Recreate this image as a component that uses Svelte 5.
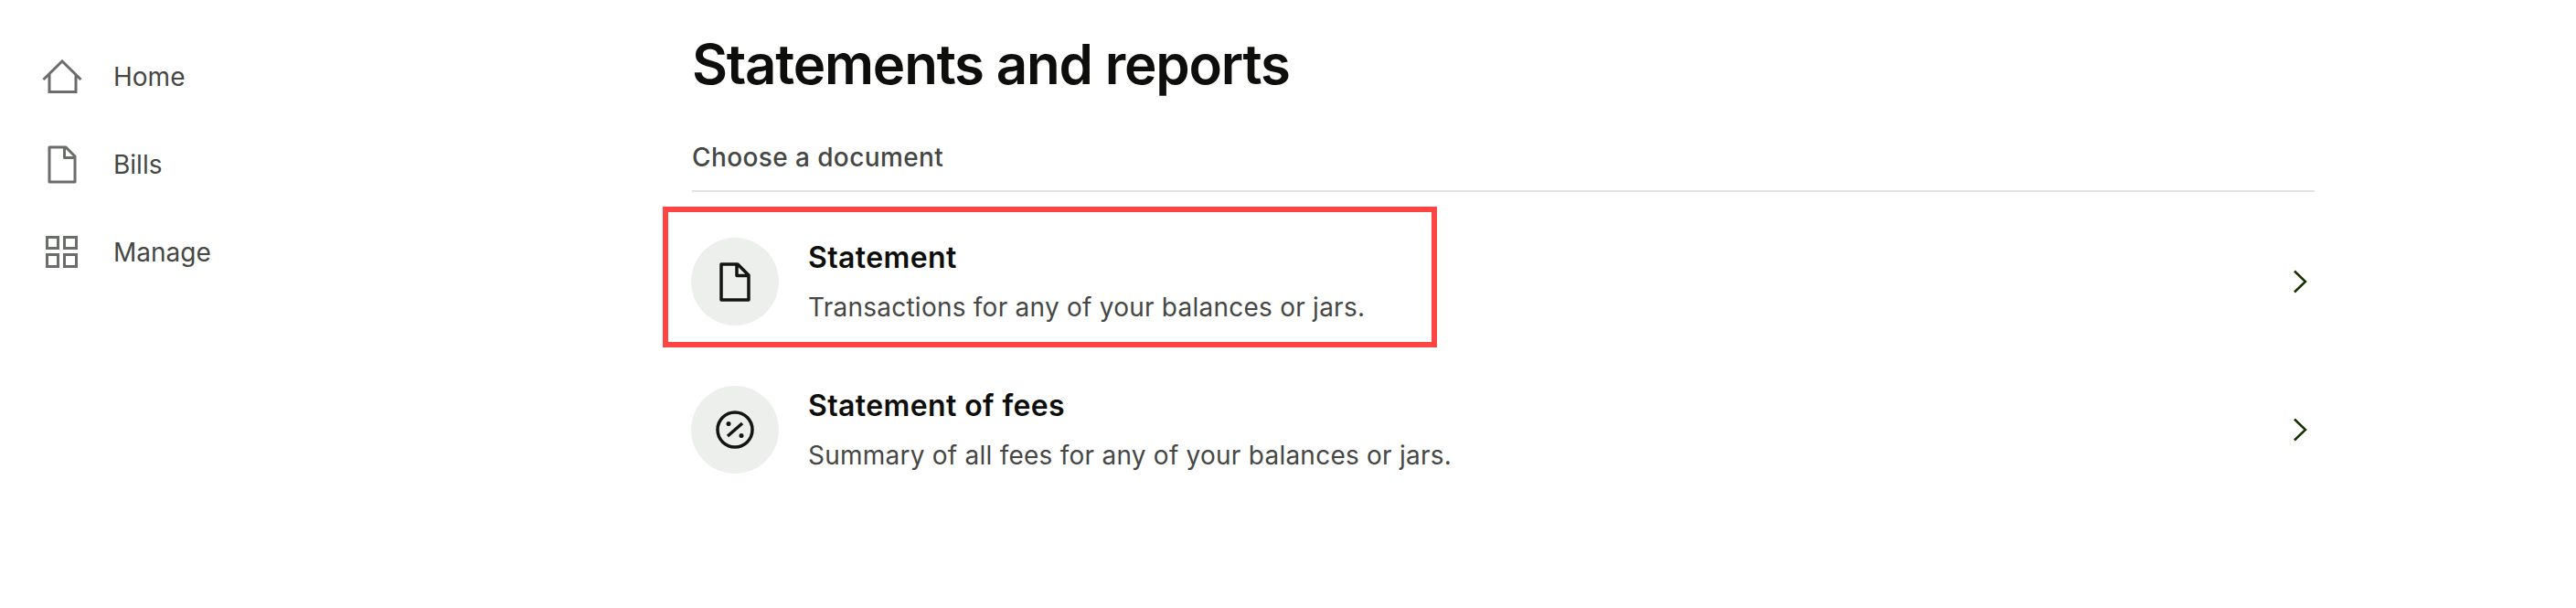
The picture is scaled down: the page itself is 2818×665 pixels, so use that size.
<script>
  const nav = [
    { label: 'Home', icon: 'home' },
    { label: 'Bills', icon: 'doc' },
    { label: 'Manage', icon: 'grid' }
  ];
  const docs = [
    { title: 'Statement', sub: 'Transactions for any of your balances or jars.', icon: 'doc', marked: true },
    { title: 'Statement of fees', sub: 'Summary of all fees for any of your balances or jars.', icon: 'pct', marked: false }
  ];
</script>

<div class="page">
  <nav class="side">
    {#each nav as n}
      <div class="nav-item">
        <span class="nav-icon">
          {#if n.icon === 'home'}
            <svg width="44" height="38" viewBox="0 0 44 38"><path d="M1.500 22 22 2l20.500 20M8 16v19.500h29V16" fill="none" stroke="#6b6d6b" stroke-width="3"/></svg>
          {:else if n.icon === 'doc'}
            <svg width="32" height="42" viewBox="0 0 32 42"><path d="M2 2h18l10 10v28H2zM18.500 2v11.500H30" fill="none" stroke="#6b6d6b" stroke-width="3" stroke-linejoin="round"/></svg>
          {:else}
            <svg width="36" height="36" viewBox="0 0 36 36" fill="none" stroke="#6b6d6b" stroke-width="3"><rect x="1.500" y="1.500" width="12" height="12"/><rect x="20.500" y="1.500" width="13" height="12"/><rect x="1.500" y="20.500" width="12" height="13"/><rect x="20.500" y="20.500" width="13" height="13"/></svg>
          {/if}
        </span>
        <span class="nav-label">{n.label}</span>
      </div>
    {/each}
  </nav>

  <main class="main">
    <h1>Statements and reports</h1>
    <div class="section">Choose a document</div>
    <div class="rows">
      {#each docs as d}
        <div class="row">
          {#if d.marked}<div class="mark"></div>{/if}
          <span class="circle">
            {#if d.icon === 'doc'}
              <svg width="34" height="43" viewBox="0 0 34 43"><path d="M2 2h18l12 12v27H2zM19 2v12.500h13" fill="none" stroke="#121511" stroke-width="3.500" stroke-linejoin="round"/></svg>
            {:else}
              <svg width="42" height="42" viewBox="0 0 42 42"><circle cx="21" cy="21" r="19" fill="none" stroke="#121511" stroke-width="3.500"/><path d="M13 28 29 14" stroke="#121511" stroke-width="3.500"/><circle cx="14" cy="14.500" r="2.500" fill="#121511"/><circle cx="28" cy="27.500" r="2.500" fill="#121511"/></svg>
            {/if}
          </span>
          <div class="text">
            <div class="title">{d.title}</div>
            <div class="sub">{d.sub}</div>
          </div>
          <svg class="chev" width="16" height="26" viewBox="0 0 16 26"><path d="M2 1.500 14 13 2 24.500" fill="none" stroke="#163300" stroke-width="2.500"/></svg>
        </div>
      {/each}
    </div>
  </main>
</div>

<style>
  :global(body) { margin: 0; background: #fff; }
  .page {
    display: flex;
    height: 665px;
    width: 2818px;
    font-family: Inter, "Liberation Sans", sans-serif;
    overflow: hidden;
  }
  .side {
    width: 757px;
    flex: none;
    padding: 36px 0 0 44px;
    box-sizing: border-box;
  }
  .nav-item {
    display: flex;
    align-items: center;
    height: 96px;
  }
  .nav-icon {
    width: 48px;
    display: flex;
    justify-content: center;
    margin-right: 32px;
  }
  .nav-label { font-size: 28px; color: #454745; }
  .main { width: 1775px; flex: none; }
  h1 {
    margin: 0;
    padding-top: 34px;
    font-size: 60px;
    line-height: 72px;
    font-weight: 600;
    letter-spacing: -1.2px;
    color: #0e0f0c;
  }
  .section {
    margin-top: 48px;
    padding-bottom: 18px;
    font-size: 28px;
    line-height: 36px;
    font-weight: 500;
    letter-spacing: 0.4px;
    color: #454745;
    border-bottom: 2px solid #e2e2e0;
  }
  .rows { padding-top: 17px; }
  .row {
    position: relative;
    display: flex;
    align-items: center;
    height: 162px;
  }
  .mark {
    position: absolute;
    left: -32px;
    top: -1px;
    width: 847px;
    height: 154px;
    box-sizing: border-box;
    border: 6px solid #ff4444;
  }
  .circle {
    width: 96px;
    height: 96px;
    border-radius: 50%;
    background: #edefec;
    display: flex;
    align-items: center;
    justify-content: center;
    flex: none;
    margin: 0 32px 0 -1px;
  }
  .text { flex: 1; }
  .title { font-size: 32px; line-height: 40px; font-weight: 600; letter-spacing: 0.4px; color: #0e0f0c; }
  .sub { font-size: 28px; line-height: 36px; margin-top: 16px; letter-spacing: 0.24px; color: #454745; }
  .chev { margin-right: 8px; }
</style>
